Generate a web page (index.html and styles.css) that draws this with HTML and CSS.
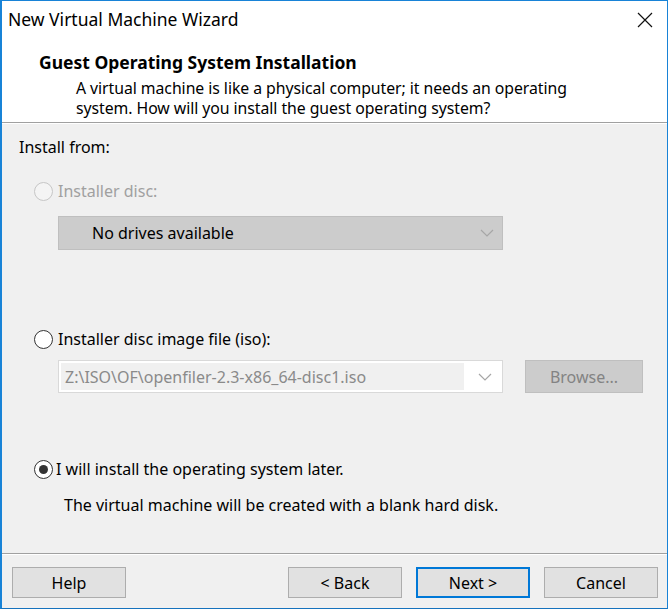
FILE: index.html
```html
<!DOCTYPE html>
<html lang="en">
<head>
    <meta charset="UTF-8">
    <title>New Virtual Machine Wizard</title>
    <link rel="stylesheet" href="styles.css">
</head>
<body>
    <div class="window">
        <div class="titlebar">
            <span class="title">New Virtual Machine Wizard</span>
            <svg class="close" width="16" height="16" viewBox="0 0 16 16">
                <path d="M1 1 L15 15 M15 1 L1 15" stroke="#111" stroke-width="1.2" fill="none"/>
            </svg>
        </div>
        <div class="header">
            <h1>Guest Operating System Installation</h1>
            <p>A virtual machine is like a physical computer; it needs an operating<br>system. How will you install the guest operating system?</p>
        </div>
        <div class="sep"></div>
        <div class="content">
            <div class="label">Install from:</div>

            <div class="option disabled opt-disc">
                <span class="radio"></span>
                <span>Installer disc:</span>
            </div>
            <div class="select-row">
                <div class="select select-disabled">
                    <span class="select-text">No drives available</span>
                    <svg class="chevron" width="14" height="8" viewBox="0 0 14 8">
                        <path d="M1 1 L7 7 L13 1" stroke="#a6a6a6" stroke-width="1.2" fill="none"/>
                    </svg>
                </div>
            </div>

            <div class="option opt-iso">
                <span class="radio"></span>
                <span>Installer disc image file (iso):</span>
            </div>
            <div class="select-row">
                <div class="select select-iso">
                    <span class="select-field">Z:\ISO\OF\openfiler-2.3-x86_64-disc1.iso</span>
                    <svg class="chevron" width="14" height="8" viewBox="0 0 14 8">
                        <path d="M1 1 L7 7 L13 1" stroke="#a6a6a6" stroke-width="1.2" fill="none"/>
                    </svg>
                </div>
                <div class="btn-browse">Browse...</div>
            </div>

            <div class="option opt-later">
                <span class="radio checked"></span>
                <span>I will install the operating system later.</span>
            </div>
            <div class="note">The virtual machine will be created with a blank hard disk.</div>
        </div>
        <div class="sep"></div>
        <div class="footer">
            <button class="btn">Help</button>
            <div class="spacer"></div>
            <button class="btn">&lt; Back</button>
            <button class="btn btn-default">Next &gt;</button>
            <button class="btn">Cancel</button>
        </div>
    </div>
</body>
</html>
```

FILE: styles.css
```css
body {
    margin: 0;
    padding: 0;
    background-color: #ffffff;
    font-family: "Noto Sans", "Open Sans", sans-serif;
    font-size: 16px;
    color: #000;
}

.window {
    width: 665px;
    height: 607px;
    border: 1px solid #1883d7;
    border-left-width: 2px;
    display: flex;
    flex-direction: column;
    background-color: #f0f0f0;
    border-bottom-color: #1672bd;
    box-shadow: 0 2px 0 #1d1d1d;
}

.titlebar {
    height: 37px;
    background: #fff;
    display: flex;
    align-items: center;
    padding-left: 6px;
    padding-right: 14px;
}

.title {
    flex: 1;
    font-size: 17.5px;
    line-height: 22px;
    margin-top: -1px;
}

.close {
    margin-top: 1px;
}

.header {
    height: 84px;
    background: #fff;
    box-sizing: border-box;
    padding-top: 14px;
}

.header h1 {
    margin: 0 0 0 37px;
    font-size: 17.5px;
    font-weight: bold;
    line-height: 20px;
}

.header p {
    margin: 6px 0 0 74px;
    font-size: 15.8px;
    line-height: 20px;
    letter-spacing: -0.05px;
}

.sep {
    height: 1px;
    background: #a0a0a0;
    border-bottom: 1px solid #fff;
}

.content {
    flex: 1;
    padding: 13px 0 0 17px;
}

.label {
    line-height: 20px;
}

.option {
    display: flex;
    align-items: center;
    gap: 5px;
    margin-left: 15px;
    line-height: 20px;
}

.opt-disc {
    margin-top: 24px;
}

.opt-iso {
    margin-top: 79px;
}

.opt-later {
    margin-top: 66px;
    gap: 3px;
}

.disabled {
    color: #a0a0a0;
}

.radio {
    width: 19px;
    height: 19px;
    border: 1px solid #333;
    border-radius: 50%;
    background: #fff;
    box-sizing: border-box;
    position: relative;
}

.disabled .radio {
    border-color: #c6c6c6;
    background: #f4f4f4;
}

.radio.checked::after {
    content: "";
    position: absolute;
    left: 4px;
    top: 4px;
    width: 9px;
    height: 9px;
    border-radius: 50%;
    background: #333;
}

.select-row {
    display: flex;
    margin-left: 39px;
    margin-top: 15px;
    gap: 22px;
}

.select {
    width: 445px;
    box-sizing: border-box;
    display: flex;
    align-items: center;
    border: 1px solid #d9d9d9;
}

.select-disabled {
    height: 34px;
    background: #cccccc;
    border-color: #bfbfbf;
    padding-left: 33px;
}

.select-text {
    flex: 1;
}

.chevron {
    margin-right: 8px;
}

.select-iso {
    height: 33px;
    background: #fff;
    padding: 2px;
    margin-top: -4px;
}

.select-field {
    flex: 1;
    align-self: stretch;
    display: flex;
    align-items: center;
    background: #f0f0f0;
    color: #8a8a8a;
    padding-left: 4px;
    margin-right: 14px;
}

.btn-browse {
    width: 118px;
    height: 33px;
    margin-top: -4px;
    box-sizing: border-box;
    background: #cccccc;
    border: 1px solid #bfbfbf;
    color: #838383;
    display: flex;
    align-items: center;
    justify-content: center;
}

.note {
    margin: 16px 0 0 45px;
    line-height: 20px;
}

.footer {
    display: flex;
    padding: 12px 0 0 10px;
    height: 53px;
    box-sizing: border-box;
    gap: 14px;
}

.spacer {
    flex: 1;
}

.btn {
    width: 114px;
    height: 31px;
    background: #e1e1e1;
    border: 1px solid #adadad;
    font-family: inherit;
    font-size: 16px;
    color: #000;
    padding: 0;
}

.btn-default {
    border: 2px solid #0078d7;
}

.btn:last-child {
    margin-right: 9px;
}
```
